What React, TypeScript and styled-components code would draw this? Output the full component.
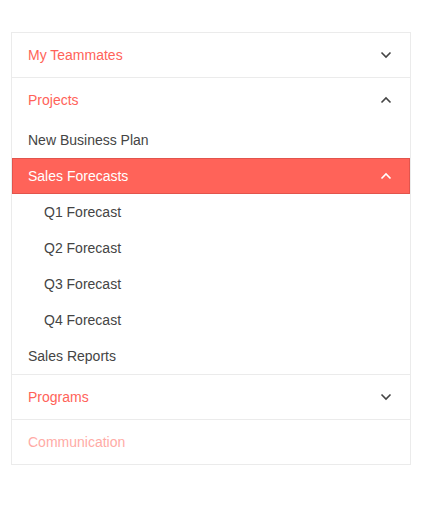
import React from "react";
import styled, { createGlobalStyle } from "styled-components";

const Global = createGlobalStyle`
  html, body { margin: 0; padding: 0; background: #fff; }
  body { font-family: "Liberation Sans", Arial, sans-serif; }
`;

const Page = styled.div`
  padding: 32px 11px 0 11px;
`;

const Panel = styled.div`
  width: 400px;
  box-sizing: border-box;
  border: 1px solid #ebebeb;
  background: #fff;
`;

const Section = styled.div<{ $last?: boolean }>`
  border-bottom: ${(p) => (p.$last ? "none" : "1px solid #ebebeb")};
`;

const Header = styled.div<{ $disabled?: boolean }>`
  height: 44px;
  display: flex;
  align-items: center;
  justify-content: space-between;
  padding: 0 18px 0 16px;
  font-size: 14px;
  color: ${(p) => (p.$disabled ? "#ffaba6" : "#ff6359")};
`;

const Item = styled.div<{ $depth?: number; $active?: boolean }>`
  height: 36px;
  box-sizing: border-box;
  display: flex;
  align-items: center;
  justify-content: space-between;
  padding: 0 18px 0 ${(p) => (p.$depth === 2 ? 32 : 16)}px;
  font-size: 14px;
  color: ${(p) => (p.$active ? "#ffffff" : "#444444")};
  background: ${(p) => (p.$active ? "#ff6359" : "transparent")};
  border: ${(p) => (p.$active ? "1px solid #e2544c" : "none")};
  ${(p) => (p.$active ? "padding-left: 15px; padding-right: 17px;" : "")}
`;

const Chevron = ({ up, color }: { up?: boolean; color: string }) => (
  <svg width="12" height="8" viewBox="0 0 12 8" style={{ display: "block" }}>
    <path
      d={up ? "M1.5 6.5 L6 2 L10.5 6.5" : "M1.5 1.5 L6 6 L10.5 1.5"}
      fill="none"
      stroke={color}
      strokeWidth="1.6"
    />
  </svg>
);

export default function App() {
  return (
    <>
      <Global />
      <Page>
        <Panel>
          <Section>
            <Header>
              <span>My Teammates</span>
              <Chevron color="#444" />
            </Header>
          </Section>
          <Section>
            <Header>
              <span>Projects</span>
              <Chevron up color="#444" />
            </Header>
            <Item>New Business Plan</Item>
            <Item $active>
              <span>Sales Forecasts</span>
              <Chevron up color="#fff" />
            </Item>
            <Item $depth={2}>Q1 Forecast</Item>
            <Item $depth={2}>Q2 Forecast</Item>
            <Item $depth={2}>Q3 Forecast</Item>
            <Item $depth={2}>Q4 Forecast</Item>
            <Item>Sales Reports</Item>
          </Section>
          <Section>
            <Header>
              <span>Programs</span>
              <Chevron color="#444" />
            </Header>
          </Section>
          <Section $last>
            <Header $disabled>
              <span>Communication</span>
            </Header>
          </Section>
        </Panel>
      </Page>
    </>
  );
}
